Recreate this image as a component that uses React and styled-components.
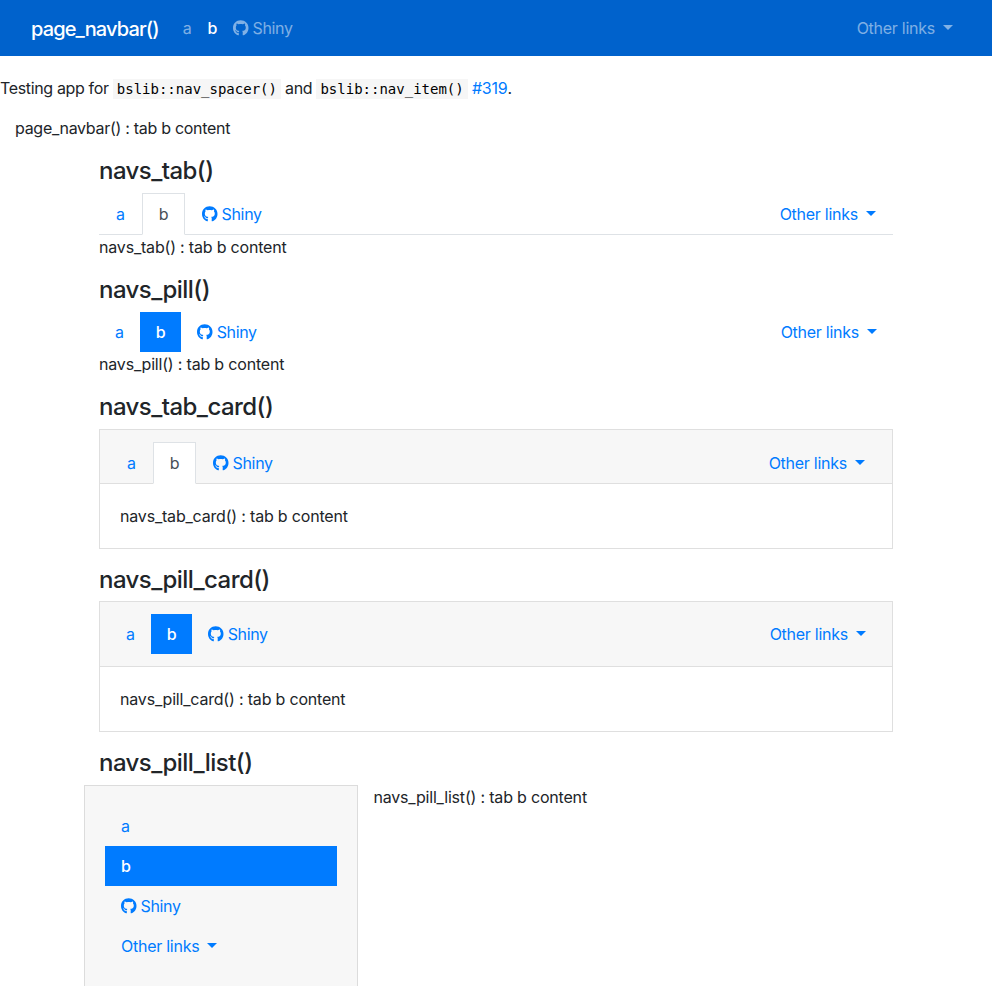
import React from "react";
import styled, { createGlobalStyle, css } from "styled-components";
import { FaGithub } from "react-icons/fa";

const GlobalStyle = createGlobalStyle`
  *, *::before, *::after { box-sizing: border-box; }
  html, body { margin: 0; background: #fff; }
  body {
    height: 986px;
    overflow: hidden;
    color: #212529;
    font: 400 16px/24px Inter, "Liberation Sans", sans-serif;
    letter-spacing: -0.35px;
  }
  #root { display: flow-root; }
`;

const Navbar = styled.header`
  display: flex;
  align-items: center;
  height: 56px;
  padding: 0 31px;
  background: #0062cc;
`;

const Brand = styled.a`
  margin-right: 16px;
  padding-top: 2px;
  color: #fff;
  font-size: 20px;
  font-weight: 500;
  line-height: 30px;
  letter-spacing: -0.86px;
  text-decoration: none;
`;

const NavbarLinks = styled.nav`
  display: flex;
  flex: 1;
`;

const Spacer = styled.span`
  flex: 1;
`;

const NavbarLink = styled.a`
  padding: 8px;
  color: ${(p) => (p.$active ? "#fff" : "rgba(255, 255, 255, 0.5)")};
  font-weight: ${(p) => (p.$active ? 500 : 400)};
  white-space: nowrap;
  text-decoration: none;
`;

const GithubIcon = styled(FaGithub)`
  display: inline-block;
  width: 15.5px;
  height: 16px;
  margin-right: 4px;
  vertical-align: -2px;
`;

const MenuLabel = styled.span`
  letter-spacing: -0.26px;
`;

const Caret = styled.span`
  display: inline-block;
  margin-left: 8px;
  vertical-align: 4px;
  border-top: 5px solid;
  border-right: 5px solid transparent;
  border-left: 5px solid transparent;
`;

const Intro = styled.p`
  margin: 20px 0 16px;
`;

const Code = styled.code`
  padding: 2px 4px;
  background: #f6f6f6;
  color: #000;
  font: 14px "DejaVu Sans Mono", monospace;
  letter-spacing: 0;
`;

const TextLink = styled.a`
  color: #007bff;
  letter-spacing: -0.2px;
  text-decoration: none;
`;

const PageContent = styled.div`
  padding: 0 15px;
  letter-spacing: -0.29px;
`;

const Container = styled.main`
  width: 794px;
  margin: 16px auto 0;
`;

const Section = styled.section`
  margin-bottom: 16px;
`;

const Heading = styled.h4`
  height: 28.8px;
  margin: 0 0 8px;
  padding-top: 1px;
  font-size: 24px;
  font-weight: 500;
  line-height: 28.8px;
  letter-spacing: -0.55px;
`;

const TabContent = styled.div`
  letter-spacing: -0.19px;
`;

const Nav = styled.nav`
  display: flex;
  flex-direction: ${(p) => (p.$stacked ? "column" : "row")};
  ${(p) => p.$tabs && !p.$inCard && css`border-bottom: 1px solid #dee2e6;`}
  ${(p) => p.$inCard && css`margin: 0 -10px;`}
`;

const pillStyle = css`
  ${(p) => p.$active && css`
    background: #007bff;
    color: #fff;
    font-weight: 500;
  `}
`;

const tabStyle = css`
  margin-bottom: -1px;
  border: 1px solid transparent;
  ${(p) => p.$active && css`
    border-color: #dee2e6 #dee2e6 #fff;
    background: #fff;
    color: #495057;
  `}
`;

const NavLink = styled.a`
  padding: 8px 16px;
  color: #007bff;
  white-space: nowrap;
  text-decoration: none;
  ${(p) => (p.$tabs ? tabStyle : pillStyle)}
`;

const Card = styled.div`
  margin-top: ${(p) => (p.$tabs ? "8.4px" : "-0.4px")};
  border: 1px solid #dfdfdf;
`;

const CardHeader = styled.div`
  padding: 12px 20px ${(p) => (p.$tabs ? "0" : "12px")};
  border-bottom: 1px solid #dfdfdf;
  background: #f7f7f7;
`;

const CardBody = styled(TabContent)`
  padding: 20px;
`;

const ListRow = styled.div`
  display: grid;
  grid-template-columns: 274.4px 1fr;
  column-gap: 15px;
  margin: 0 -15px;
`;

const Well = styled.div`
  height: 222px;
  padding: 20px;
  border: 1px solid #dcdcdc;
  background: #f7f7f7;
`;

function LinkItems({ as: Link, tabs, spacer = true }) {
  return (
    <>
      <Link href="#a" $tabs={tabs}>a</Link>
      <Link href="#b" $tabs={tabs} $active>b</Link>
      <Link href="#shiny" $tabs={tabs}><GithubIcon />Shiny</Link>
      {spacer && <Spacer />}
      <Link href="#other" $tabs={tabs}><MenuLabel>Other links</MenuLabel><Caret /></Link>
    </>
  );
}

function NavSet({ tabs, inCard, stacked }) {
  return (
    <Nav $tabs={tabs} $inCard={inCard} $stacked={stacked}>
      <LinkItems as={NavLink} tabs={tabs} spacer={!stacked} />
    </Nav>
  );
}

function PlainSection({ name, tabs }) {
  return (
    <Section>
      <Heading>{name}</Heading>
      <NavSet tabs={tabs} />
      <TabContent>{name} : tab b content</TabContent>
    </Section>
  );
}

function CardSection({ name, tabs }) {
  return (
    <Section>
      <Heading>{name}</Heading>
      <Card $tabs={tabs}>
        <CardHeader $tabs={tabs}><NavSet tabs={tabs} inCard /></CardHeader>
        <CardBody>{name} : tab b content</CardBody>
      </Card>
    </Section>
  );
}

export default function App() {
  return (
    <>
      <GlobalStyle />
      <Navbar>
        <Brand href="#">page_navbar()</Brand>
        <NavbarLinks><LinkItems as={NavbarLink} /></NavbarLinks>
      </Navbar>
      <Intro>
        Testing app for <Code>bslib::nav_spacer()</Code> and <Code>bslib::nav_item()</Code>{" "}
        <TextLink href="#319">#319</TextLink>.
      </Intro>
      <PageContent>page_navbar() : tab b content</PageContent>
      <Container>
        <PlainSection name="navs_tab()" tabs />
        <PlainSection name="navs_pill()" />
        <CardSection name="navs_tab_card()" tabs />
        <CardSection name="navs_pill_card()" />
        <Heading>navs_pill_list()</Heading>
        <ListRow>
          <Well><NavSet stacked /></Well>
          <TabContent>navs_pill_list() : tab b content</TabContent>
        </ListRow>
      </Container>
    </>
  );
}
